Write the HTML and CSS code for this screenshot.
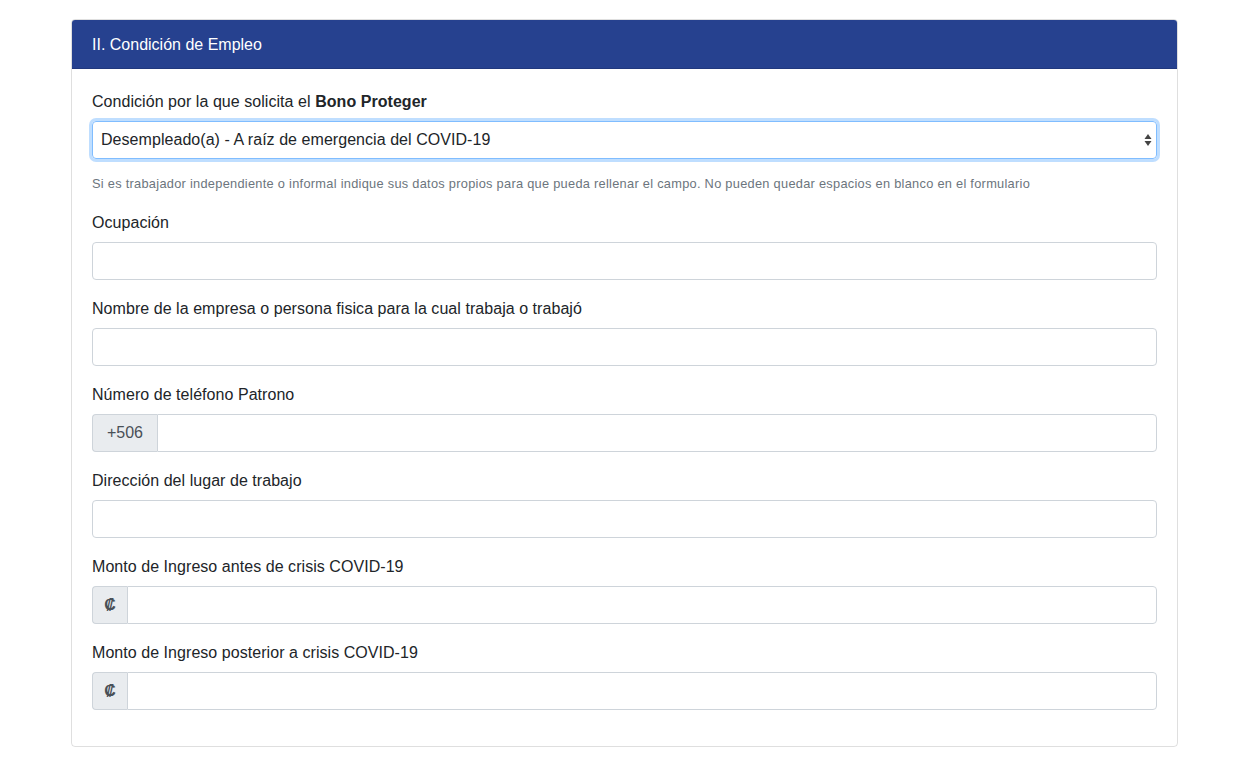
FILE: index.html
```html
<!DOCTYPE html>
<html lang="es">
<head>
    <meta charset="UTF-8">
    <title>Condición de Empleo</title>
    <link rel="stylesheet" href="styles.css">
</head>
<body>
    <div class="page">
        <div class="card">
            <div class="card-header">II. Condición de Empleo</div>
            <div class="card-body">
                <div class="form-group first">
                    <label>Condición por la que solicita el <b>Bono Proteger</b></label>
                    <div class="select focus">
                        <span>Desempleado(a) - A raíz de emergencia del COVID-19</span>
                        <svg width="8" height="14" viewBox="0 0 8 14">
                            <path d="M4 1 L7.5 6 L0.5 6 Z" fill="#444"/>
                            <path d="M4 13 L7.5 8 L0.5 8 Z" fill="#444"/>
                        </svg>
                    </div>
                </div>
                <small class="form-text">Si es trabajador independiente o informal indique sus datos propios para que pueda rellenar el campo. No pueden quedar espacios en blanco en el formulario</small>

                <div class="form-group">
                    <label>Ocupación</label>
                    <div class="form-control"></div>
                </div>

                <div class="form-group">
                    <label>Nombre de la empresa o persona fisica para la cual trabaja o trabajó</label>
                    <div class="form-control"></div>
                </div>

                <div class="form-group">
                    <label>Número de teléfono Patrono</label>
                    <div class="input-group">
                        <span class="prepend phone">+506</span>
                        <div class="form-control"></div>
                    </div>
                </div>

                <div class="form-group">
                    <label>Dirección del lugar de trabajo</label>
                    <div class="form-control"></div>
                </div>

                <div class="form-group">
                    <label>Monto de Ingreso antes de crisis COVID-19</label>
                    <div class="input-group">
                        <span class="prepend colon">₡</span>
                        <div class="form-control"></div>
                    </div>
                </div>

                <div class="form-group">
                    <label>Monto de Ingreso posterior a crisis COVID-19</label>
                    <div class="input-group">
                        <span class="prepend colon">₡</span>
                        <div class="form-control"></div>
                    </div>
                </div>
            </div>
        </div>
    </div>
</body>
</html>
```

FILE: styles.css
```css
body {
    margin: 0;
    font-family: "Liberation Sans", Arial, sans-serif;
    font-size: 16px;
    line-height: 24px;
    color: #212529;
    background-color: #fff;
}

.page {
    padding: 19px 60px 0 71px;
}

.card {
    border: 1px solid rgba(0, 0, 0, 0.125);
    border-radius: 4px;
    overflow: hidden;
}

.card-header {
    background-color: #26418f;
    color: #fff;
    padding: 13px 20px 11px;
    border-bottom: 1px solid rgba(0, 0, 0, 0.125);
}

.card-body {
    padding: 20px;
}

.form-group {
    margin-bottom: 16px;
}

.form-group.first {
    margin-bottom: 15px;
}

label {
    display: block;
    padding-top: 1px;
    margin-bottom: 7px;
    letter-spacing: 0.05px;
}

.form-control {
    flex: 1;
    height: 38px;
    box-sizing: border-box;
    border: 1px solid #ced4da;
    border-radius: 4px;
    background-color: #fff;
}

.select {
    height: 38px;
    box-sizing: border-box;
    border: 1px solid #80bdff;
    border-radius: 4px;
    box-shadow: 0 0 0 3px rgba(0, 123, 255, 0.25);
    display: flex;
    align-items: center;
    justify-content: space-between;
    padding: 0 4px 0 8px;
    letter-spacing: 0.05px;
}

.form-text {
    display: block;
    font-size: 12.8px;
    line-height: 19px;
    letter-spacing: 0.28px;
    color: #6c757d;
    margin-bottom: 17px;
}

.input-group {
    display: flex;
}

.input-group .form-control {
    border-top-left-radius: 0;
    border-bottom-left-radius: 0;
}

.prepend {
    display: flex;
    align-items: center;
    justify-content: center;
    box-sizing: border-box;
    height: 38px;
    background-color: #e9ecef;
    border: 1px solid #ced4da;
    border-right: none;
    border-radius: 4px 0 0 4px;
    color: #495057;
}

.phone {
    width: 65px;
}

.colon {
    width: 35px;
    font-weight: bold;
}
```
